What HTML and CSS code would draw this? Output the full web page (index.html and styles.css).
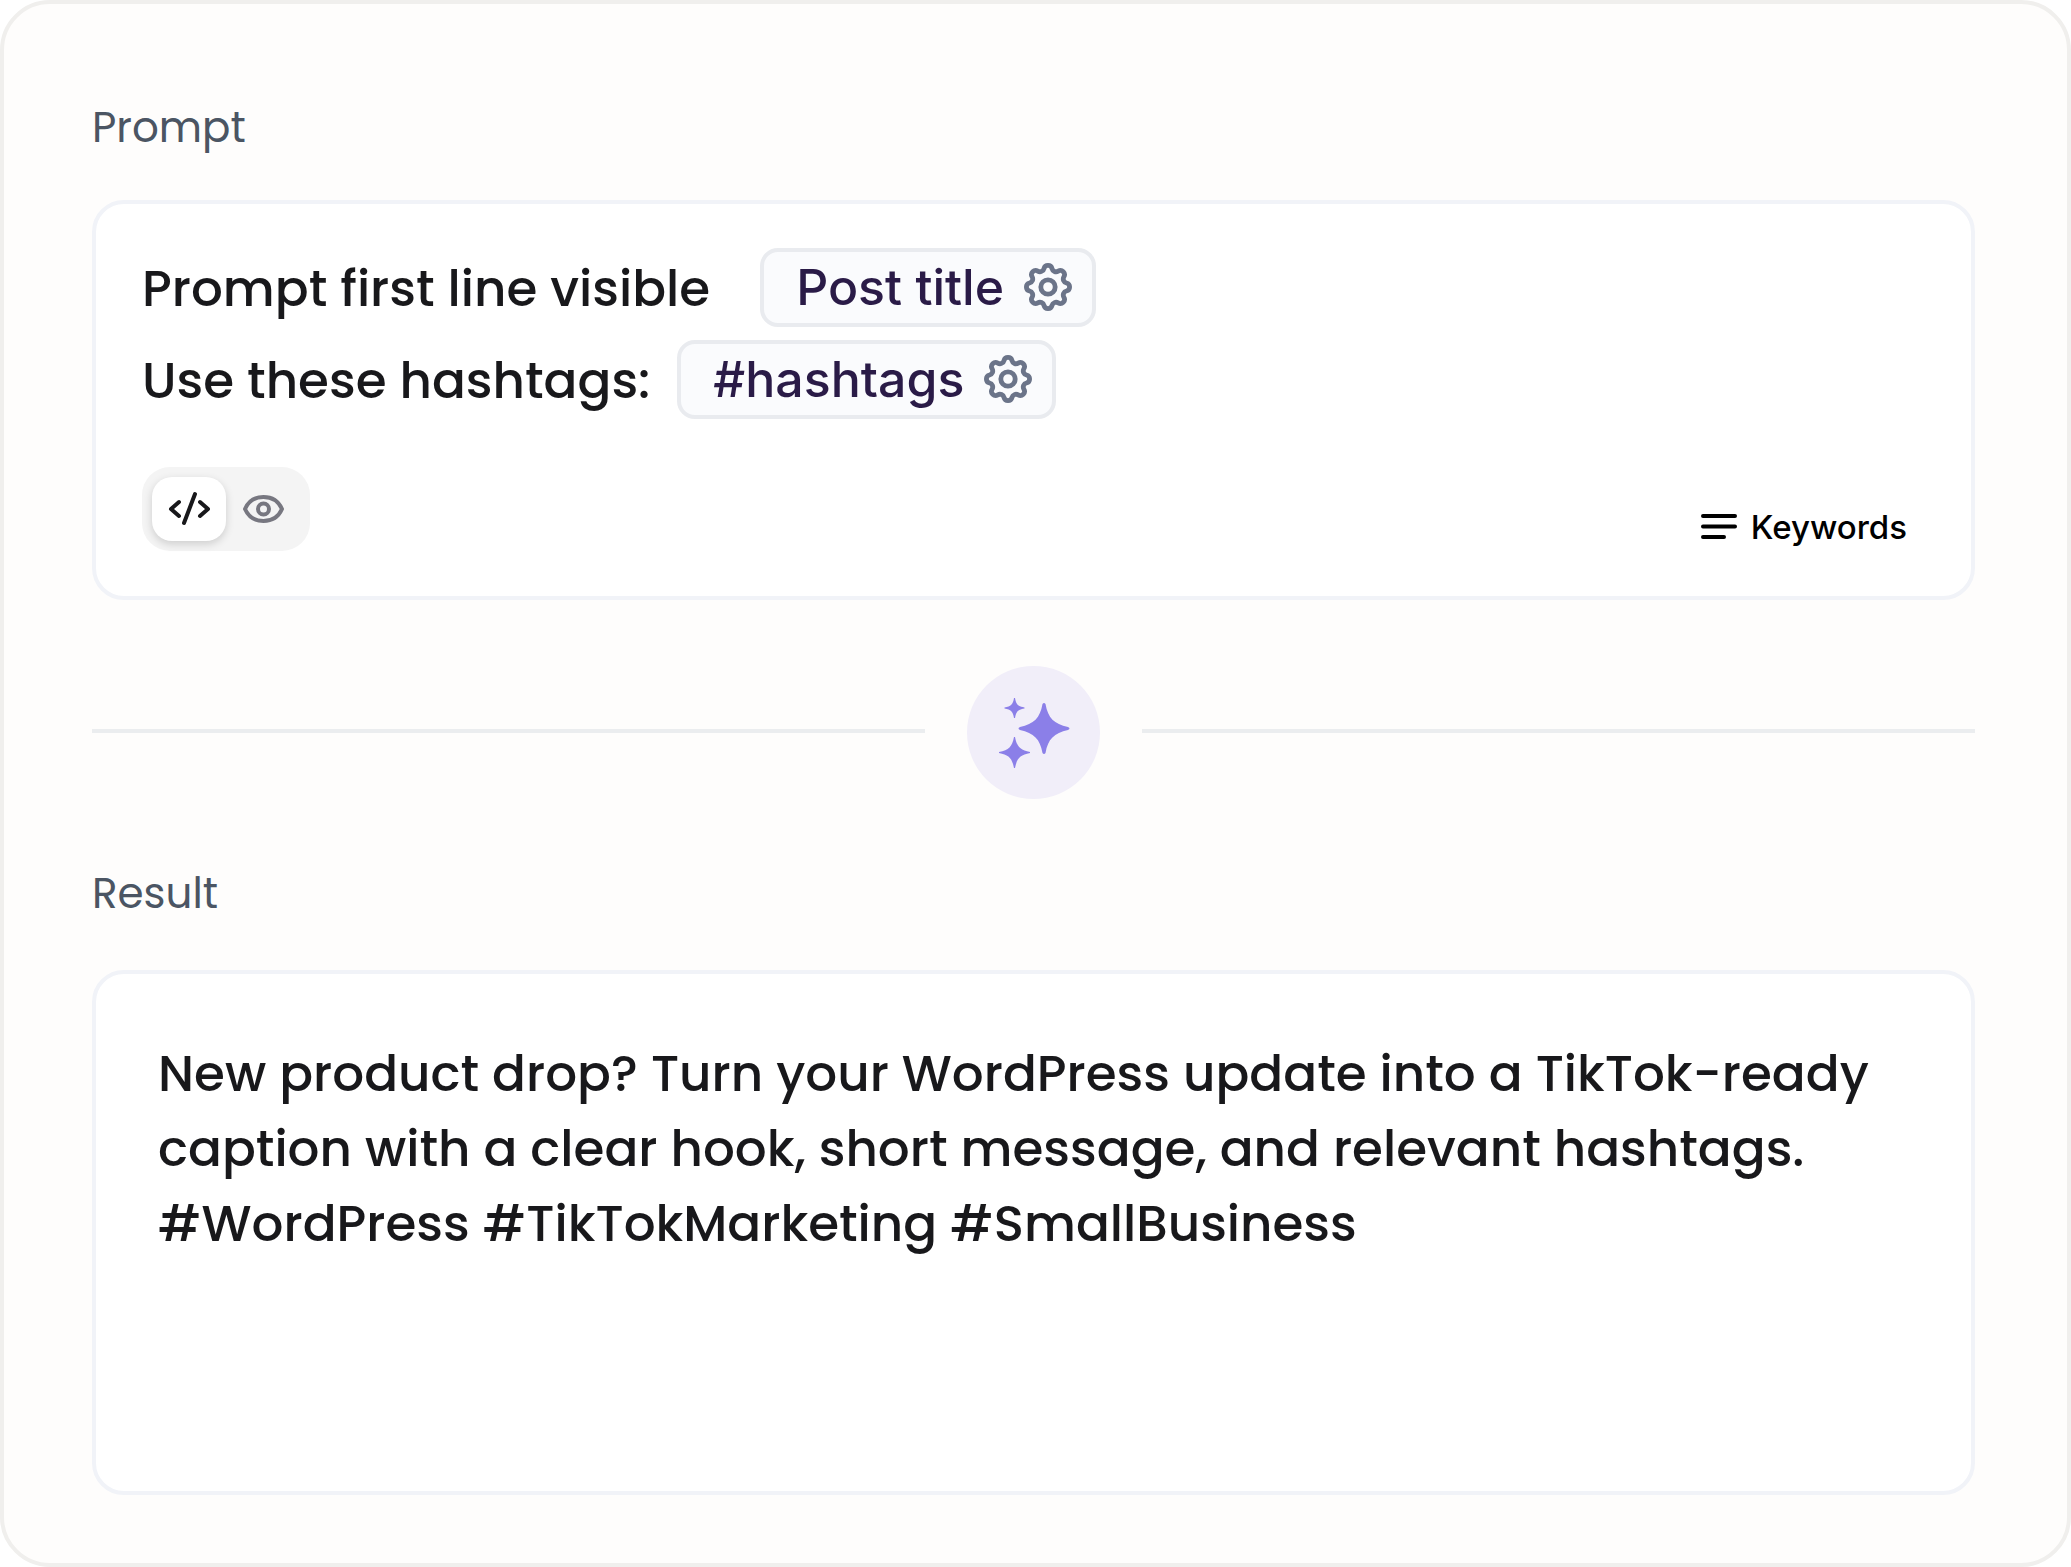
FILE: index.html
```html
<!DOCTYPE html>
<html lang="en">
<head>
  <meta charset="utf-8">
  <title>Prompt</title>
  <link rel="stylesheet" href="styles.css">
</head>
<body>
  <main class="card">
    <h2 class="label">Prompt</h2>
    <section class="box prompt">
      <div class="line">
        <span class="line-text first">Prompt first line visible</span>
        <button class="chip">Post title
          <svg class="gear" viewBox="2 2 20 20"><use href="#gear"/></svg>
        </button>
      </div>
      <div class="line">
        <span class="line-text">Use these hashtags:</span>
        <button class="chip">#hashtags
          <svg class="gear" viewBox="2 2 20 20"><use href="#gear"/></svg>
        </button>
      </div>
      <div class="toolbar">
        <div class="toggle">
          <button class="toggle-btn active" aria-label="Code">
            <svg width="42" height="36" viewBox="0 0 42 36"><path d="M11 11L3 18L11 25M32 11L40 18L32 25M27 3L16 32"/></svg>
          </button>
          <button class="toggle-btn" aria-label="Preview">
            <svg width="42" height="36" viewBox="0 0 42 36"><path d="M3 18C7 9 14 6 21.500 6S36 9 40 18C36 27 28.500 30 21.500 30S7 27 3 18Z"/><circle cx="21.500" cy="18" r="5.500"/></svg>
          </button>
        </div>
        <button class="keywords">
          <svg width="36" height="26" viewBox="0 0 36 26"><path d="M2 2H34M2 12.500H34M2 23H23"/></svg>
          Keywords
        </button>
      </div>
    </section>

    <div class="divider">
      <span class="spark">
        <svg viewBox="0 0 133 133">
          <path d="M75.500 38Q77 36 78.500 38C81 52 87 58 101 61Q104 62.500 101 64C87 67 81 73 78.500 87Q77 89 75.500 87C73 73 67 67 53 64Q50 62.500 53 61C67 58 73 52 75.500 38Z"/>
          <path d="M47 32H48C49 38.500 51 40.500 57.500 41.500V42.500C51 43.500 49 45.500 48 52H47C46 45.500 44 43.500 37.500 42.500V41.500C44 40.500 46 38.500 47 32Z"/>
          <path d="M47 71H48C50 81 53 84 63 86V87C53 89 50 92 48 102H47C45 92 42 89 32 87V86C42 84 45 81 47 71Z"/>
        </svg>
      </span>
    </div>

    <h2 class="label">Result</h2>
    <section class="box result">
      <p>New product drop? Turn your WordPress update into a TikTok-ready caption with a clear hook, short message, and relevant hashtags. #WordPress #TikTokMarketing #SmallBusiness</p>
    </section>
  </main>

  <svg class="symbols" aria-hidden="true">
    <defs>
      <g id="gear">
        <path d="M10.325 4.317c.426-1.756 2.924-1.756 3.350 0a1.724 1.724 0 0 0 2.573 1.066c1.543-.94 3.310.826 2.370 2.370a1.724 1.724 0 0 0 1.065 2.572c1.756.426 1.756 2.924 0 3.350a1.724 1.724 0 0 0-1.066 2.573c.94 1.543-.826 3.310-2.370 2.370a1.724 1.724 0 0 0-2.572 1.065c-.426 1.756-2.924 1.756-3.350 0a1.724 1.724 0 0 0-2.573-1.066c-1.543.94-3.310-.826-2.370-2.370a1.724 1.724 0 0 0-1.065-2.572c-1.756-.426-1.756-2.924 0-3.350a1.724 1.724 0 0 0 1.066-2.573c-.94-1.543.826-3.310 2.370-2.370c1 .608 2.296.07 2.572-1.065z"/>
        <circle cx="12" cy="12" r="3"/>
      </g>
    </defs>
  </svg>
</body>
</html>
```
FILE: styles.css
```css
* {
  box-sizing: border-box;
}

body {
  margin: 0;
  background-color: #fff;
  font-family: Poppins, Inter, sans-serif;
  color: #18181b;
}

button {
  border: none;
  padding: 0;
  font-family: Inter, sans-serif;
  cursor: pointer;
}

svg {
  display: block;
  fill: none;
  stroke: currentColor;
  stroke-linecap: round;
  stroke-linejoin: round;
}

.card {
  display: flex;
  flex-direction: column;
  min-height: 100vh;
  padding: 94px 92px 68px 88px;
  background-color: #fefdfc;
  border: 4px solid #f0efed;
  border-radius: 50px;
}

.label {
  margin: 0 0 42px;
  font-size: 42px;
  font-weight: 400;
  line-height: 60px;
  color: #4b5563;
}

.box {
  background-color: #fff;
  border: 4px solid #f1f3f8;
  border-radius: 32px;
}

.prompt {
  padding: 44px 64px 45px 46px;
}

.line {
  display: flex;
  align-items: center;
  margin-bottom: 13px;
}

.line-text {
  margin-right: 27px;
  padding-top: 2px;
  font-size: 50px;
  font-weight: 500;
  line-height: 75px;
}

.line-text.first {
  margin-right: 50px;
}

.chip {
  display: flex;
  align-items: center;
  gap: 20px;
  height: 79px;
  padding: 0 20px 2px 32px;
  font-size: 50px;
  font-weight: 500;
  line-height: 60px;
  color: #2a1b47;
  background-color: #fafbfd;
  border: 4px solid #e9ebef;
  border-radius: 18px;
}

.gear {
  width: 48px;
  height: 48px;
  stroke-width: 2;
  color: #6b7489;
}

.toolbar {
  display: flex;
  justify-content: space-between;
  align-items: center;
  margin-top: 48px;
}

.toggle {
  display: flex;
  padding: 10px;
  background-color: #f4f4f4;
  border-radius: 28px;
}

.toggle-btn {
  display: flex;
  align-items: center;
  justify-content: center;
  width: 74px;
  height: 64px;
  color: #777780;
  stroke-width: 4;
  background-color: transparent;
  border-radius: 20px;
}

.toggle-btn.active {
  color: #18181b;
  background-color: #fff;
  box-shadow: 0 3px 8px rgba(0, 0, 0, 0.16);
}

.keywords {
  display: flex;
  align-items: center;
  gap: 14px;
  margin-top: 35px;
  font-size: 33px;
  font-weight: 500;
  color: #000;
  stroke-width: 4;
  background-color: transparent;
}

.divider {
  display: flex;
  align-items: center;
  gap: 42px;
  margin: 66px 0 65px;
}

.divider::before,
.divider::after {
  content: "";
  flex: 1;
  height: 4px;
  margin-bottom: 4px;
  background-color: #ebedef;
}

.spark {
  width: 133px;
  height: 133px;
  background-color: #f1eef9;
  border-radius: 50%;
}

.spark svg {
  fill: #8b7fe8;
  stroke: none;
}

.result {
  flex: 1;
  margin-top: 4px;
  padding: 62px;
}

.result p {
  margin: 0;
  font-size: 50px;
  font-weight: 500;
  line-height: 75px;
}

.symbols {
  display: none;
}
```
